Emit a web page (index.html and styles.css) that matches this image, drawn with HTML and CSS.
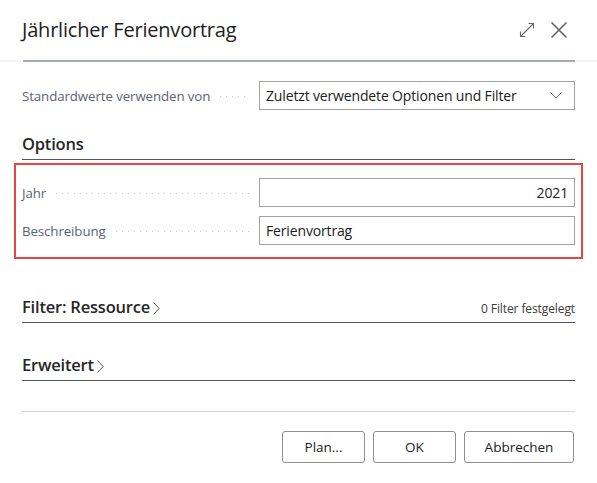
FILE: index.html
```html
<!DOCTYPE html>
<html lang="de">
<head>
<meta charset="utf-8">
<title>Jährlicher Ferienvortrag</title>
<link rel="stylesheet" href="styles.css">
</head>
<body>
<div class="dialog">
  <header class="titlebar">
    <h1 class="title">Jährlicher Ferienvortrag</h1>
    <div class="title-actions">
      <button class="icon-btn" aria-label="Vergrößern">
        <svg width="18" height="18" viewBox="0 0 18 18" fill="none" stroke="#6b6b6b" stroke-width="1.1">
          <path d="M2.5 15.5 L15.5 2.5"/>
          <path d="M2.5 10.5 V15.5 H7.5"/>
          <path d="M10.5 2.5 H15.5 V7.5"/>
        </svg>
      </button>
      <button class="icon-btn" aria-label="Schließen">
        <svg width="18" height="18" viewBox="0 0 18 18" fill="none" stroke="#5f5f5f" stroke-width="1.5">
          <path d="M1.5 1.5 L16.5 16.5 M16.5 1.5 L1.5 16.5"/>
        </svg>
      </button>
    </div>
  </header>
  <div class="header-rule"><div class="header-rule-line"></div></div>

  <main class="content">
    <div class="field-row defaults-row">
      <label class="field-label">Standardwerte verwenden von</label>
      <span class="leader"></span>
      <div class="field select">
        <span>Zuletzt verwendete Optionen und Filter</span>
        <svg class="select-chevron" width="12" height="7" viewBox="0 0 12 7" fill="none" stroke="#6b6b6b" stroke-width="1">
          <path d="M0.5 0.5 L6 6 L11.5 0.5"/>
        </svg>
      </div>
    </div>

    <section class="group">
      <h2 class="group-title">Options</h2>
    </section>

    <div class="highlight">
      <div class="field-row">
        <label class="field-label">Jahr</label>
        <span class="leader"></span>
        <div class="field input align-right">2021</div>
      </div>
      <div class="field-row">
        <label class="field-label">Beschreibung</label>
        <span class="leader"></span>
        <div class="field input">Ferienvortrag</div>
      </div>
    </div>

    <section class="group collapsed filter-group">
      <h2 class="group-title">Filter: Ressource
        <svg class="group-chevron" width="7" height="13" viewBox="0 0 7 13" fill="none" stroke="#555" stroke-width="1">
          <path d="M0.5 0.5 L6.2 6.5 L0.5 12.5"/>
        </svg>
      </h2>
      <span class="group-note">0 Filter festgelegt</span>
    </section>

    <section class="group collapsed advanced-group">
      <h2 class="group-title">Erweitert
        <svg class="group-chevron" width="7" height="13" viewBox="0 0 7 13" fill="none" stroke="#555" stroke-width="1">
          <path d="M0.5 0.5 L6.2 6.5 L0.5 12.5"/>
        </svg>
      </h2>
    </section>
  </main>

  <footer class="footer">
    <div class="footer-rule"></div>
    <div class="buttons">
      <button class="btn btn-plan">Plan...</button>
      <button class="btn btn-ok">OK</button>
      <button class="btn btn-cancel">Abbrechen</button>
    </div>
  </footer>
</div>
</body>
</html>
```

FILE: styles.css
```css
* { box-sizing: border-box; }

html, body {
  margin: 0;
  padding: 0;
  background: #ffffff;
}

body {
  font-family: "Open Sans", "Noto Sans", "Liberation Sans", sans-serif;
  color: #212121;
}

.dialog {
  width: 597px;
  height: 483px;
  background: #ffffff;
}

/* title bar */
.titlebar {
  height: 60px;
  display: flex;
  align-items: center;
  justify-content: space-between;
  padding: 0 29px 0 22px;
}

.title {
  margin: 0;
  font-size: 20px;
  font-weight: 400;
  letter-spacing: -0.2px;
  color: #212121;
  padding-bottom: 1px;
}

.title-actions {
  display: flex;
  align-items: center;
  gap: 14px;
}

.icon-btn {
  border: 0;
  background: none;
  padding: 0;
  width: 18px;
  height: 18px;
  display: flex;
}

.header-rule {
  height: 2px;
  background: #f4f4f5;
  padding: 0 22px 0 23px;
}

.header-rule-line {
  height: 2px;
  background: #a6aab2;
}

/* content */
.content {
  padding: 0 22px;
}

.field-row {
  display: flex;
  align-items: center;
  height: 29px;
}

.field-label {
  font-size: 13.3px;
  color: #5b6472;
  white-space: nowrap;
  letter-spacing: -0.1px;
}

.leader {
  flex: 1;
  height: 1px;
  margin: 2px 10px 0 10px;
  background-image: linear-gradient(to right, #c3c6cc 1px, transparent 1px);
  background-size: 6px 1px;
  background-repeat: repeat-x;
}

.field {
  width: 316px;
  height: 29px;
  border: 1px solid #a3a3a3;
  display: flex;
  align-items: center;
  padding: 0 6px;
  font-size: 14px;
  color: #212121;
  letter-spacing: -0.15px;
}

.align-right {
  justify-content: flex-end;
}

.defaults-row {
  margin-top: 19px;
}

.select {
  justify-content: space-between;
  padding-right: 12px;
}

/* section headers */
.group {
  display: flex;
  align-items: flex-end;
  justify-content: space-between;
  border-bottom: 1px solid #4f5660;
  height: 31px;
  padding-bottom: 4px;
}

.defaults-row + .group {
  margin-top: 19px;
  height: 31px;
}

.group-title {
  margin: 0;
  font-size: 16.5px;
  font-weight: 600;
  color: #262626;
  letter-spacing: -0.2px;
  display: flex;
  align-items: center;
  gap: 3px;
  line-height: 22px;
}

.group-chevron {
  margin-top: 2px;
}

.group-note {
  font-size: 12px;
  color: #3a3a3a;
  letter-spacing: -0.1px;
  line-height: 18px;
}

/* highlighted options block */
.highlight {
  margin: 3px -8px 0 -8px;
  border: 2px solid #e9443f;
  padding: 13px 6px 12px 6px;
  display: flex;
  flex-direction: column;
  gap: 9px;
}

.filter-group {
  margin-top: 33px;
}

.advanced-group {
  margin-top: 27px;
}

/* footer */
.footer {
  padding: 0 22px;
  margin-top: 30px;
}

.footer-rule {
  height: 1px;
  background: #d4d4d4;
}

.buttons {
  display: flex;
  justify-content: flex-end;
  gap: 8px;
  margin-top: 19px;
  padding-right: 1px;
}

.btn {
  height: 32px;
  border: 1px solid #8f8f8f;
  border-radius: 3px;
  background: #ffffff;
  font-family: inherit;
  font-size: 13.5px;
  color: #212121;
  padding: 0;
}

.btn-plan, .btn-ok { width: 83px; }
.btn-cancel { width: 110px; }
```
